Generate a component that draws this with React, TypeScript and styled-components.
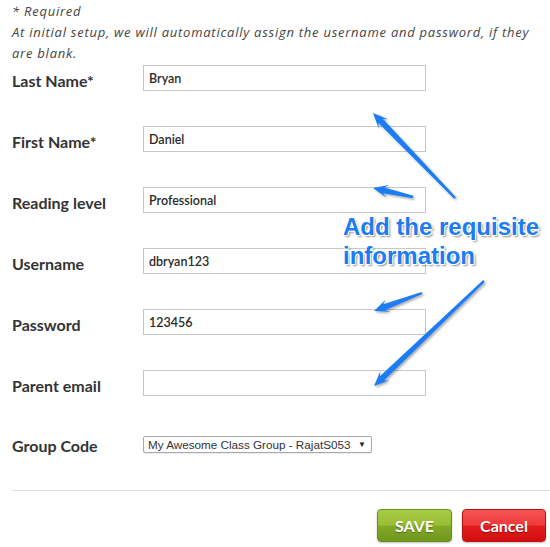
import React from "react";
import styled, { createGlobalStyle } from "styled-components";

const GlobalStyle = createGlobalStyle`
  html, body { margin: 0; padding: 0; background: #ffffff; }
  * { box-sizing: border-box; }
`;

const Page = styled.div`
  position: relative;
  width: 550px;
  height: 547px;
  overflow: hidden;
  padding-left: 12px;
  font-family: Lato, "Open Sans", sans-serif;
  color: #333;
`;

const Note = styled.p`
  margin: 0;
  padding-top: 1px;
  font-family: "Open Sans", Lato, sans-serif;
  font-style: italic;
  font-size: 13px;
  letter-spacing: 0.75px;
  line-height: 21px;
  color: #444;
`;

const Form = styled.div`
  display: flex;
  flex-direction: column;
`;

const FieldRow = styled.div<{ $top?: number; $bottom?: number }>`
  display: grid;
  grid-template-columns: 131px 283px;
  align-items: start;
  margin-top: ${(p) => p.$top ?? 0}px;
  margin-bottom: ${(p) => p.$bottom ?? 35}px;
`;

const Label = styled.label<{ $pad?: number }>`
  font-size: 16px;
  font-weight: 700;
  line-height: 18px;
  padding-top: ${(p) => p.$pad ?? 7}px;
  color: #333;
`;

const TextInput = styled.input`
  width: 283px;
  height: 26px;
  border: 1px solid #c6c6c6;
  padding: 0 5px;
  font-family: Lato, "Open Sans", sans-serif;
  font-size: 12.5px;
  font-weight: 600;
  color: #2a2a2a;
  background: #fff;
  outline: none;
`;

const SelectBox = styled.div`
  display: flex;
  align-items: center;
  justify-content: space-between;
  width: 229px;
  height: 17px;
  border: 1px solid #a9a9a9;
  border-radius: 2px;
  padding: 0 5px 0 4px;
  font-family: "Liberation Sans", Arial, sans-serif;
  font-size: 11.7px;
  white-space: nowrap;
  color: #333;
  background: #fff;
  box-shadow: 0 1px 1px rgba(0, 0, 0, 0.08);
`;

const Caret = styled.span`
  font-size: 8px;
  color: #222;
`;

const Divider = styled.hr`
  margin: 35px 0 0 0;
  border: none;
  border-top: 1px solid #dcdcdc;
  width: 100%;
`;

const Actions = styled.div`
  display: flex;
  justify-content: flex-end;
  gap: 10px;
  margin-top: 18px;
  padding-right: 4px;
`;

const Button = styled.button<{ $variant: "save" | "cancel" }>`
  height: 33px;
  width: ${(p) => (p.$variant === "save" ? 75 : 84)}px;
  border-radius: 4px;
  border: 1px solid ${(p) => (p.$variant === "save" ? "#6a8a1e" : "#b81212")};
  background: ${(p) =>
    p.$variant === "save"
      ? "linear-gradient(#a9cc44 0%, #98bf35 48%, #82ab26 52%, #6f961d 100%)"
      : "linear-gradient(#f55555 0%, #ee3a3a 48%, #e21d1d 52%, #d10d0d 100%)"};
  color: #fff;
  font-family: Lato, "Open Sans", sans-serif;
  font-size: 16px;
  font-weight: 700;
  text-shadow: 0 1px 1px rgba(0, 0, 0, 0.35);
  box-shadow: 0 1px 2px rgba(0, 0, 0, 0.25);
  padding: 0;
`;

const Callout = styled.div`
  position: absolute;
  left: 343px;
  top: 212px;
  font-family: "Liberation Sans", Arial, sans-serif;
  font-weight: 700;
  font-size: 24px;
  line-height: 29px;
  color: #1d7cf2;
  text-shadow: -1px -1px 0 #fff, 1px -1px 0 #fff, -1px 1px 0 #fff, 1px 1px 0 #fff,
    2px 2px 2px rgba(0, 0, 0, 0.45);
  pointer-events: none;
`;

const Overlay = styled.svg`
  position: absolute;
  left: 0;
  top: 0;
  pointer-events: none;
`;

type Pt = [number, number];
const arrows: { t: Pt; p: Pt }[] = [
  { t: [455, 198], p: [373, 113] },
  { t: [413, 197], p: [373, 188] },
  { t: [422, 293], p: [374, 311] },
  { t: [484, 281], p: [374, 386] },
];

function arrowPoints(t: Pt, p: Pt): string {
  const dx = p[0] - t[0];
  const dy = p[1] - t[1];
  const len = Math.hypot(dx, dy);
  const ux = dx / len;
  const uy = dy / len;
  const nx = -uy;
  const ny = ux;
  const L = 15;
  const W = 6.5;
  const neck = 3;
  const tail = 1.2;
  const at = (along: number, side: number): string =>
    `${(p[0] - ux * along + nx * side).toFixed(1)},${(p[1] - uy * along + ny * side).toFixed(1)}`;
  const pts = [
    `${(t[0] + nx * tail).toFixed(1)},${(t[1] + ny * tail).toFixed(1)}`,
    at(L - 4, neck),
    at(L, W),
    at(0, 0),
    at(L, -W),
    at(L - 4, -neck),
    `${(t[0] - nx * tail).toFixed(1)},${(t[1] - ny * tail).toFixed(1)}`,
  ];
  return pts.join(" ");
}

const fields = [
  { label: "Last Name*", value: "Bryan" },
  { label: "First Name*", value: "Daniel" },
  { label: "Reading level", value: "Professional" },
  { label: "Username", value: "dbryan123" },
  { label: "Password", value: "123456" },
  { label: "Parent email", value: "" },
];

export default function App() {
  return (
    <>
      <GlobalStyle />
      <Page>
        <Note>
          * Required
          <br />
          At initial setup, we will automatically assign the username and password, if they are blank.
        </Note>
        <Form>
          {fields.map((f, i) => (
            <FieldRow key={f.label} $top={i === 0 ? 1 : 0}>
              <Label>{f.label}</Label>
              <TextInput defaultValue={f.value} readOnly />
            </FieldRow>
          ))}
          <FieldRow $top={5} $bottom={0}>
            <Label $pad={1}>Group Code</Label>
            <SelectBox>
              <span>My Awesome Class Group - RajatS053</span>
              <Caret>▼</Caret>
            </SelectBox>
          </FieldRow>
          <Divider />
          <Actions>
            <Button $variant="save">SAVE</Button>
            <Button $variant="cancel">Cancel</Button>
          </Actions>
        </Form>
        <Overlay width={550} height={547} viewBox="0 0 550 547">
          <defs>
            <filter id="arrowShadow" x="-20%" y="-20%" width="140%" height="140%">
              <feDropShadow dx="1.5" dy="1.5" stdDeviation="1" floodColor="#000" floodOpacity="0.35" />
            </filter>
          </defs>
          {arrows.map((a, i) => (
            <polygon key={i} points={arrowPoints(a.t, a.p)} fill="#1d7cf2" filter="url(#arrowShadow)" />
          ))}
        </Overlay>
        <Callout>
          Add the requisite
          <br />
          information
        </Callout>
      </Page>
    </>
  );
}
